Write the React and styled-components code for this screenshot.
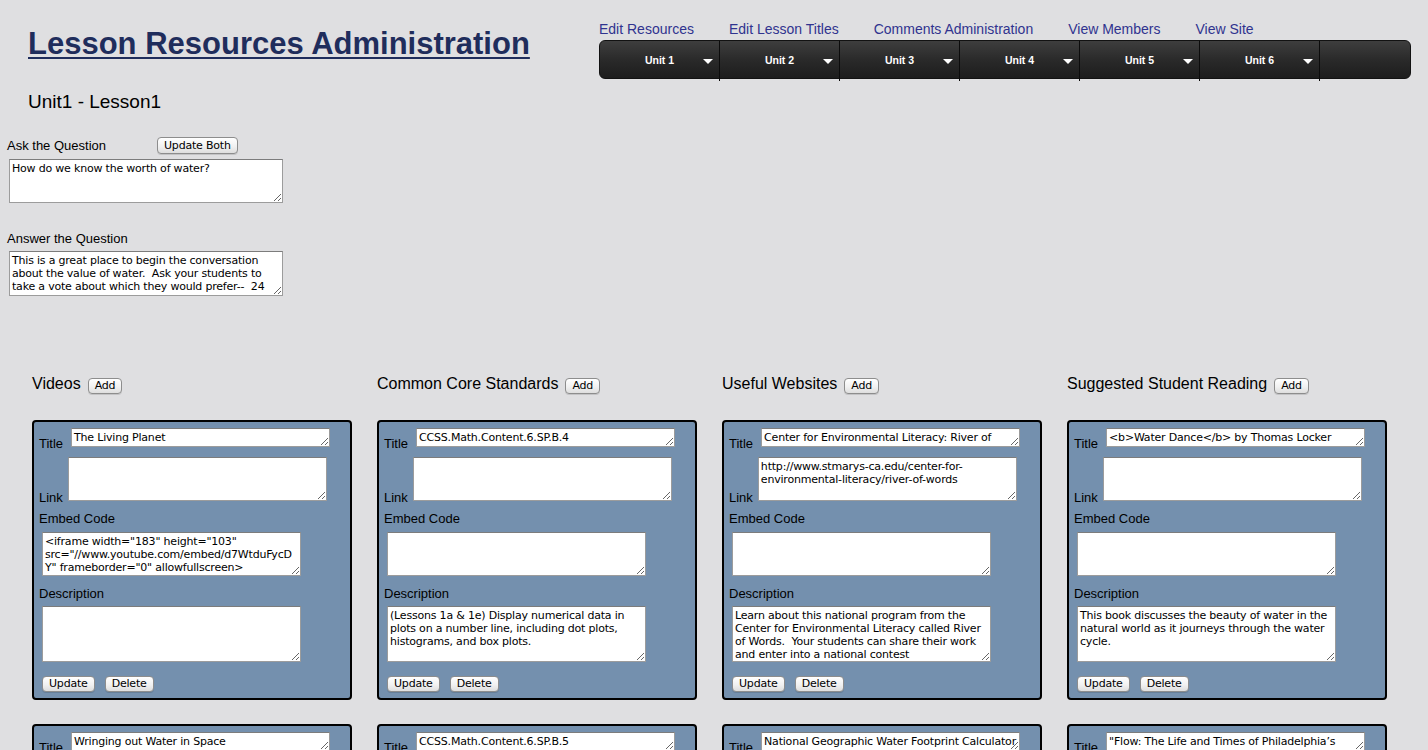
import React from 'react';
import styled, { createGlobalStyle } from 'styled-components';

const GlobalStyle = createGlobalStyle`
  html {
    overflow: hidden;
  }
  body {
    margin: 0;
    background: #dfdfe1;
    color: #000;
    font-family: "Liberation Sans", Arial, sans-serif;
  }
`;

const Page = styled.div`
  padding-top: 21px;
`;

const Header = styled.header`
  display: flex;
  align-items: flex-start;
`;

const TitleBlock = styled.div`
  width: 571px;
  padding-left: 28px;
  padding-top: 5px;
`;

const PageTitle = styled.h1`
  margin: 0;
  font-size: 31px;
  line-height: 36px;
  font-weight: bold;
  color: #1f2d5c;
  text-decoration: underline;
  text-decoration-thickness: 1.5px;
  text-underline-offset: 3px;
`;

const LessonName = styled.h2`
  margin: 29px 0 0;
  font-size: 19px;
  line-height: 22px;
  font-weight: normal;
`;

const NavBlock = styled.nav`
  width: 812px;
`;

const NavLinks = styled.div`
  display: flex;
  gap: 35px;
`;

const NavLink = styled.a`
  font-size: 14px;
  line-height: 16px;
  color: #30338f;
  text-decoration: none;
  cursor: pointer;
`;

const MenuBar = styled.ul`
  display: flex;
  align-items: flex-start;
  margin: 3px 0 0;
  padding: 0;
  list-style: none;
  height: 39px;
  box-sizing: border-box;
  border: 1px solid #121212;
  border-radius: 6px;
  background: linear-gradient(#3e3e3e, #2a2a2a 50%, #1d1d1d);
`;

const MenuItem = styled.li`
  position: relative;
  width: 120px;
  height: 40px;
  padding-bottom: 3px;
  box-sizing: border-box;
  display: flex;
  align-items: center;
  justify-content: center;
  border-right: 1px solid #0b0b0b;
  color: #fff;
  font-size: 10.5px;
  font-weight: bold;
`;

const Caret = styled.span`
  position: absolute;
  right: 6px;
  top: 18px;
  width: 0;
  height: 0;
  border-left: 5px solid transparent;
  border-right: 5px solid transparent;
  border-top: 5px solid #fff;
`;

const QuestionForm = styled.section`
  margin-top: 24px;
  padding-left: 7px;
`;

const AskRow = styled.div`
  display: flex;
  align-items: center;
  height: 17px;
`;

const FormLabel = styled.label`
  display: block;
  font-size: 13px;
  line-height: 17px;
  width: ${(p) => p.$width || 'auto'};
  margin-top: ${(p) => p.$top || 0}px;
`;

const Button = styled.button`
  height: ${(p) => p.$height || 16}px;
  padding: 0 6px;
  border: 1px solid #8d8d8d;
  border-radius: 4px;
  background: linear-gradient(#ffffff, #f1f1f1 55%, #dedede);
  box-shadow: 0 1px 0 rgba(0, 0, 0, 0.12);
  font-family: "DejaVu Sans", sans-serif;
  font-size: 11px;
  letter-spacing: -0.2px;
  line-height: 14px;
  color: #000;
  cursor: pointer;
`;

const TextBox = styled.textarea`
  display: block;
  box-sizing: border-box;
  width: ${(p) => p.$width}px;
  height: ${(p) => p.$height}px;
  margin: ${(p) => p.$top || 0}px 0 0 ${(p) => p.$left || 0}px;
  padding: 2px ${(p) => p.$padRight || 2}px 2px 2px;
  border: 1px solid #9c9c9c;
  border-top-color: #7c7c7c;
  background: #fff;
  font-family: "DejaVu Sans", sans-serif;
  font-size: 11px;
  letter-spacing: -0.2px;
  line-height: 13px;
  color: #000;
  overflow: hidden;
  flex: none;
`;

const Sections = styled.div`
  display: grid;
  grid-template-columns: repeat(4, 320px);
  column-gap: 25px;
  align-items: start;
  margin-top: 82px;
  padding-left: 32px;
`;

const Column = styled.div`
  display: flex;
  flex-direction: column;
`;

const ColumnHeader = styled.div`
  display: flex;
  align-items: center;
  gap: 7px;
  height: 16px;
`;

const ColumnTitle = styled.h3`
  margin: 0 0 4px;
  font-size: 16px;
  line-height: 16px;
  font-weight: normal;
`;

const Card = styled.div`
  box-sizing: border-box;
  width: 320px;
  margin-top: ${(p) => (p.$first ? 26 : 24)}px;
  padding: 6px 5px 6px;
  border: 2px solid #000;
  border-radius: 4px;
  background: #7490ae;
`;

const FieldRow = styled.div`
  display: flex;
  align-items: flex-end;
  gap: ${(p) => p.$gap}px;
  margin-top: ${(p) => p.$top || 0}px;
`;

const InlineLabel = styled.label`
  font-size: 13px;
  line-height: 13px;
  margin-bottom: -3px;
`;

const BlockLabel = styled.label`
  display: block;
  font-size: 13px;
  line-height: 16px;
  margin-top: 10px;
`;

const CardButtons = styled.div`
  display: flex;
  gap: 10px;
  margin: 14px 0 0 3px;
`;

const sections = [
  {
    name: 'Videos',
    items: [
      {
        title: 'The Living Planet',
        link: '',
        embed:
          '<iframe width="183" height="103" src="//www.youtube.com/embed/d7WtduFycDY" frameborder="0" allowfullscreen></iframe>',
        description: '',
      },
      {
        title: 'Wringing out Water in Space',
        link: '',
        embed:
          '<iframe width="183" height="103" src="//www.youtube.com/embed/o8TssbmY-GM" frameborder="0" allowfullscreen></iframe>',
        description: '',
      },
    ],
  },
  {
    name: 'Common Core Standards',
    items: [
      {
        title: 'CCSS.Math.Content.6.SP.B.4',
        link: '',
        embed: '',
        description:
          '(Lessons 1a & 1e) Display numerical data in plots on a number line, including dot plots, histograms, and box plots.',
      },
      {
        title: 'CCSS.Math.Content.6.SP.B.5',
        link: '',
        embed: '',
        description: 'Summarize numerical data sets in relation to their context.',
      },
    ],
  },
  {
    name: 'Useful Websites',
    items: [
      {
        title: 'Center for Environmental Literacy: River of Words',
        link: 'http://www.stmarys-ca.edu/center-for-environmental-literacy/river-of-words',
        embed: '',
        description:
          'Learn about this national program from the Center for Environmental Literacy called River of Words.  Your students can share their work and enter into a national contest',
      },
      {
        title: 'National Geographic Water Footprint Calculator',
        link: 'http://environment.nationalgeographic.com/environment/freshwater/water-footprint-calculator/',
        embed: '',
        description: '',
      },
    ],
  },
  {
    name: 'Suggested Student Reading',
    items: [
      {
        title: '<b>Water Dance</b> by Thomas Locker',
        link: '',
        embed: '',
        description:
          'This book discusses the beauty of water in the natural world as it journeys through the water cycle.',
      },
      {
        title: '"Flow: The Life and Times of Philadelphia\u2019s Schuylkill River" by Beth Kephart',
        link: '',
        embed: '',
        description: '',
      },
    ],
  },
];

const units = ['Unit 1', 'Unit 2', 'Unit 3', 'Unit 4', 'Unit 5', 'Unit 6'];

const navLinks = [
  'Edit Resources',
  'Edit Lesson Titles',
  'Comments Administration',
  'View Members',
  'View Site',
];

function ResourceCard({ item, first }) {
  return (
    <Card $first={first}>
      <FieldRow $gap={8}>
        <InlineLabel>Title</InlineLabel>
        <TextBox $width={259} $height={19} defaultValue={item.title} />
      </FieldRow>
      <FieldRow $gap={5} $top={10}>
        <InlineLabel>Link</InlineLabel>
        <TextBox $width={259} $height={44} defaultValue={item.link} />
      </FieldRow>
      <BlockLabel>Embed Code</BlockLabel>
      <TextBox
        $width={259}
        $height={44}
        $top={5}
        $left={3}
        $padRight={6}
        defaultValue={item.embed}
      />
      <BlockLabel>Description</BlockLabel>
      <TextBox
        $width={259}
        $height={56}
        $top={4}
        $left={3}
        $padRight={4}
        defaultValue={item.description}
      />
      <CardButtons>
        <Button>Update</Button>
        <Button>Delete</Button>
      </CardButtons>
    </Card>
  );
}

export default function App() {
  return (
    <Page>
      <GlobalStyle />
      <Header>
        <TitleBlock>
          <PageTitle>Lesson Resources Administration</PageTitle>
          <LessonName>Unit1 - Lesson1</LessonName>
        </TitleBlock>
        <NavBlock>
          <NavLinks>
            {navLinks.map((l) => (
              <NavLink key={l}>{l}</NavLink>
            ))}
          </NavLinks>
          <MenuBar>
            {units.map((u) => (
              <MenuItem key={u}>
                {u}
                <Caret />
              </MenuItem>
            ))}
          </MenuBar>
        </NavBlock>
      </Header>

      <QuestionForm>
        <AskRow>
          <FormLabel $width="150px">Ask the Question</FormLabel>
          <Button $height={17}>Update Both</Button>
        </AskRow>
        <TextBox
          $width={274}
          $height={44}
          $top={5}
          $left={2}
          defaultValue="How do we know the worth of water?"
        />
        <FormLabel $top={27}>Answer the Question</FormLabel>
        <TextBox
          $width={274}
          $height={45}
          $top={4}
          $left={2}
          defaultValue="This is a great place to begin the conversation about the value of water.  Ask your students to take a vote about which they would prefer--  24 hours without water or 24 hours without electricity."
        />
      </QuestionForm>

      <Sections>
        {sections.map((s) => (
          <Column key={s.name}>
            <ColumnHeader>
              <ColumnTitle>{s.name}</ColumnTitle>
              <Button>Add</Button>
            </ColumnHeader>
            {s.items.map((item, i) => (
              <ResourceCard key={item.title} item={item} first={i === 0} />
            ))}
          </Column>
        ))}
      </Sections>
    </Page>
  );
}
